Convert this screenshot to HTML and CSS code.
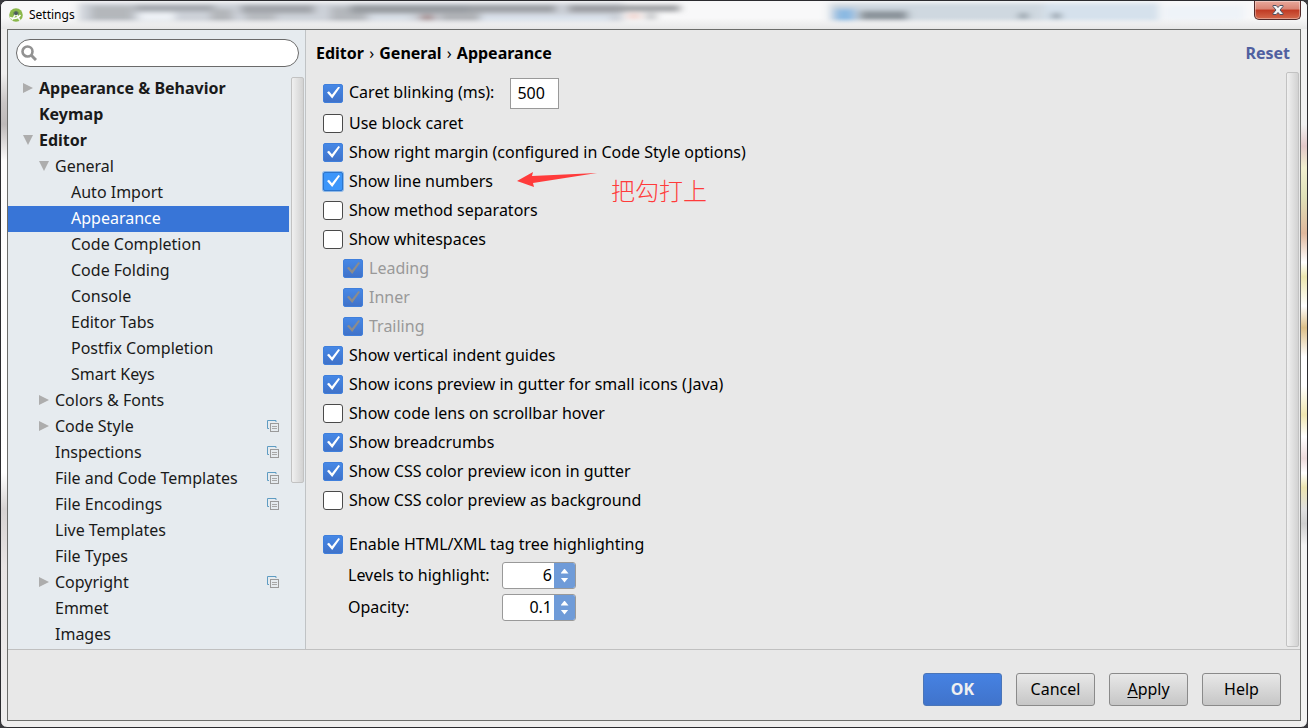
FILE: index.html
```html
<!DOCTYPE html>
<html lang="en">
  <head>
    <meta charset="UTF-8" />
    <meta name="viewport" content="width=device-width, initial-scale=1.0" />
    <title>Settings</title>
    <link rel="stylesheet" href="styles.css">
  </head>
  <body>
    <!-- Shared icons -->
    <svg class="sprite" aria-hidden="true">
      <symbol id="copy" viewBox="0 0 12 12">
        <path d="M2 8.500H.5V.5H9V2" fill="none" stroke="#5f9cc2" />
        <rect x="3.500" y="3.500" width="8" height="8" fill="#e6ebef" stroke="#9a9a9a" />
        <path d="M5 6.500h5M5 8.500h5" stroke="#a8a8a8" />
      </symbol>
    </svg>

    <div class="window">
      <header class="titlebar">
        <!-- Aero glass: blurred shapes of what lies behind the window -->
        <svg class="glass" viewBox="0 0 1308 29" preserveAspectRatio="none" aria-hidden="true">
          <defs>
            <filter id="blur" x="-5%" y="-50%" width="110%" height="200%">
              <feGaussianBlur stdDeviation="4 2" />
            </filter>
            <linearGradient id="fade" x1="0" y1="0" x2="0" y2="1">
              <stop offset="0.600" stop-color="#e7e7e7" stop-opacity="0" />
              <stop offset="1" stop-color="#e7e7e7" />
            </linearGradient>
          </defs>
          <rect width="1308" height="29" fill="#f8f8f9" />
          <g filter="url(#blur)">
            <rect x="78" y="2" width="545" height="20" fill="#cdd2d9" />
            <rect x="90" y="5" width="42" height="15" fill="#b4b7bb" />
            <rect x="138" y="12" width="36" height="9" fill="#eef2f6" />
            <rect x="134" y="4" width="80" height="7" fill="#a4a8ae" />
            <rect x="210" y="8" width="22" height="13" fill="#b3b6ba" />
            <rect x="240" y="4" width="74" height="9" fill="#a2a5aa" />
            <rect x="245" y="13" width="30" height="8" fill="#b8bbc0" />
            <rect x="330" y="6" width="36" height="15" fill="#b4b7bc" />
            <rect x="350" y="4" width="120" height="9" fill="#989ca1" />
            <rect x="370" y="14" width="40" height="7" fill="#d9e0e8" />
            <rect x="420" y="14" width="14" height="7" fill="#aa9698" />
            <rect x="440" y="12" width="40" height="9" fill="#b0b3b7" />
            <rect x="470" y="4" width="86" height="8" fill="#9da0a5" />
            <rect x="568" y="4" width="55" height="8" fill="#9c9ea3" />
            <rect x="480" y="15" width="130" height="7" fill="#dae2ec" />
            <rect x="620" y="4" width="60" height="7" fill="#a0a2a5" />
            <rect x="628" y="13" width="12" height="6" fill="#f0d2cc" />
            <rect x="646" y="12" width="10" height="8" fill="#c6c8ca" />
            <rect x="830" y="2" width="215" height="19" fill="#cfd8e0" />
            <rect x="1045" y="2" width="115" height="19" fill="#d5e1ec" />
            <rect x="1165" y="4" width="80" height="16" fill="#eef3f8" />
            <rect x="835" y="8" width="20" height="13" fill="#8bb9e2" />
            <rect x="860" y="10" width="48" height="10" fill="#8c949b" />
            <rect x="1020" y="12" width="8" height="7" fill="#8e99a2" />
            <rect x="1053" y="12" width="8" height="7" fill="#8e99a2" />
          </g>
          <rect width="1308" height="29" fill="url(#fade)" />
        </svg>
        <svg class="logo" viewBox="0 0 14 14" aria-hidden="true">
          <circle cx="7" cy="7" r="6.800" fill="#8bb84c" />
          <path d="M4.500 4.500Q7 1 9.500 4.500V7h-5z" fill="#5d7a55" />
          <path d="M6.500 6.500 3 12M7.500 6.500 11 12.500" stroke="#f2f5ee" stroke-width="1.500" />
          <path d="M1 9.500Q7 12.500 11.500 7" fill="none" stroke="#fff" stroke-width="1.500" />
          <circle cx="7" cy="5.500" r="1.500" fill="#4b5560" />
        </svg>
        <span class="title">Settings</span>
        <button class="close" aria-label="Close">
          <svg viewBox="0 0 12 10" width="12" height="10" aria-hidden="true">
            <path d="M1 .5h3.200L6 2.500 7.800.5H11v1L8 5l3 3.500v1H7.800L6 7.500 4.200 9.500H1v-1L4 5 1 1.500z" fill="#f5f5f5" stroke="#4c5263" />
          </svg>
        </button>
      </header>

      <div class="client">
        <div class="panes">
          <aside class="sidebar">
            <div class="search">
              <svg viewBox="0 0 16 16" width="16" height="16" aria-hidden="true">
                <circle cx="6.500" cy="6.500" r="5" fill="none" stroke="#929292" stroke-width="2.600" />
                <path d="M10 10l5 5" stroke="#929292" stroke-width="3" />
              </svg>
              <input type="text" aria-label="Search settings" />
            </div>
            <div class="tree-area">
              <ul class="tree">
                <li><a href="#" class="top"><i class="closed"></i>Appearance &amp; Behavior</a></li>
                <li><a href="#" class="top"><i></i>Keymap</a></li>
                <li><a href="#" class="top"><i class="open"></i>Editor</a></li>
                <li><a href="#" class="sub"><i class="open"></i>General</a></li>
                <li><a href="#" class="leaf"><i></i>Auto Import</a></li>
                <li><a href="#" class="leaf selected"><i></i>Appearance</a></li>
                <li><a href="#" class="leaf"><i></i>Code Completion</a></li>
                <li><a href="#" class="leaf"><i></i>Code Folding</a></li>
                <li><a href="#" class="leaf"><i></i>Console</a></li>
                <li><a href="#" class="leaf"><i></i>Editor Tabs</a></li>
                <li><a href="#" class="leaf"><i></i>Postfix Completion</a></li>
                <li><a href="#" class="leaf"><i></i>Smart Keys</a></li>
                <li><a href="#" class="sub"><i class="closed"></i>Colors &amp; Fonts</a></li>
                <li><a href="#" class="sub"><i class="closed"></i>Code Style<svg class="copy"><use href="#copy" /></svg></a></li>
                <li><a href="#" class="sub"><i></i>Inspections<svg class="copy"><use href="#copy" /></svg></a></li>
                <li><a href="#" class="sub"><i></i>File and Code Templates<svg class="copy"><use href="#copy" /></svg></a></li>
                <li><a href="#" class="sub"><i></i>File Encodings<svg class="copy"><use href="#copy" /></svg></a></li>
                <li><a href="#" class="sub"><i></i>Live Templates</a></li>
                <li><a href="#" class="sub"><i></i>File Types</a></li>
                <li><a href="#" class="sub"><i class="closed"></i>Copyright<svg class="copy"><use href="#copy" /></svg></a></li>
                <li><a href="#" class="sub"><i></i>Emmet</a></li>
                <li><a href="#" class="sub"><i></i>Images</a></li>
              </ul>
              <div class="scrollbar tree-scroll"></div>
            </div>
          </aside>

          <main class="content">
            <div class="heading">
              <h1>Editor <span>›</span> General <span>›</span> Appearance</h1>
              <a href="#" class="reset">Reset</a>
            </div>
            <div class="content-body">
              <form class="options">
                <div class="row caret-row">
                  <label class="check"><input type="checkbox" checked />Caret blinking (ms):</label>
                  <input class="ms" type="text" value="500" aria-label="Caret blinking (ms)" />
                </div>
                <label class="row check"><input type="checkbox" />Use block caret</label>
                <label class="row check"><input type="checkbox" checked />Show right margin (configured in Code Style options)</label>
                <div class="row noted">
                  <label class="check"><input type="checkbox" class="focused" checked />Show line numbers</label>
                  <div class="note">
                    <svg viewBox="0 0 80 16" width="80" height="16" aria-hidden="true">
                      <path d="M0 9 16 0l-1 4L80 1 16 11l1 4z" fill="#ff3b3b" />
                    </svg>
                    <span lang="zh">把勾打上</span>
                  </div>
                </div>
                <label class="row check"><input type="checkbox" />Show method separators</label>
                <label class="row check"><input type="checkbox" />Show whitespaces</label>
                <label class="row check nested"><input type="checkbox" checked disabled />Leading</label>
                <label class="row check nested"><input type="checkbox" checked disabled />Inner</label>
                <label class="row check nested"><input type="checkbox" checked disabled />Trailing</label>
                <label class="row check"><input type="checkbox" checked />Show vertical indent guides</label>
                <label class="row check"><input type="checkbox" checked />Show icons preview in gutter for small icons (Java)</label>
                <label class="row check"><input type="checkbox" />Show code lens on scrollbar hover</label>
                <label class="row check"><input type="checkbox" checked />Show breadcrumbs</label>
                <label class="row check"><input type="checkbox" checked />Show CSS color preview icon in gutter</label>
                <label class="row check"><input type="checkbox" />Show CSS color preview as background</label>
                <label class="row check tags"><input type="checkbox" checked />Enable HTML/XML tag tree highlighting</label>
                <div class="spinners">
                  <label for="levels">Levels to highlight:</label>
                  <div class="spinner">
                    <input id="levels" type="text" value="6" />
                    <div class="steps">
                      <button type="button" class="up" aria-label="More levels"></button>
                      <button type="button" class="down" aria-label="Fewer levels"></button>
                    </div>
                  </div>
                  <label for="opacity">Opacity:</label>
                  <div class="spinner">
                    <input id="opacity" type="text" value="0.1" />
                    <div class="steps">
                      <button type="button" class="up" aria-label="Raise opacity"></button>
                      <button type="button" class="down" aria-label="Lower opacity"></button>
                    </div>
                  </div>
                </div>
              </form>
              <div class="scrollbar"></div>
            </div>
          </main>
        </div>

        <footer class="footer">
          <button class="btn primary">OK</button>
          <button class="btn">Cancel</button>
          <button class="btn"><u>A</u>pply</button>
          <button class="btn">Help</button>
        </footer>
      </div>
    </div>
  </body>
</html>
```
FILE: styles.css
```css
* {
  box-sizing: border-box;
}

body {
  margin: 0;
  background-color: #3a3a3e;
  font-family: "Noto Sans", "Open Sans", sans-serif;
  font-size: 16px;
  line-height: 26px;
  color: #000;
}

input,
button {
  font: inherit;
  color: inherit;
}

.sprite {
  display: none;
}

/* Window frame */
.window {
  position: relative;
  display: flex;
  flex-direction: column;
  min-height: 100vh;
  padding: 0 6px 6px;
  border: 1px solid #2b2b2f;
  border-radius: 7px;
  background:
    linear-gradient(#f1f1f1 17%, #e2c8c8 20%, #f1efcf 23%, #dfe0b8 27%, #e0b89c 32%, #fff 36%, #ece6ae 38%, #fff 42%, #dcbf88 45%, #fff 49%, #fff 53%, #efe6b0 57%, #fff 60%, #ecdada 63%, #fff 65%, #ece4b0 67%, #e0e0e0 70%, #cfcfcf 72%, #f3f3f3 75%) right / 7px 100% no-repeat,
    linear-gradient(#efeeee 10%, #c9c5c5 14%, #bdb9b9 17%, #fdfcfc 22%, #fff 65%, #d6d2d2 70%, #e8e4e4 78%, #efeeee) left / 7px 100% no-repeat,
    #efeeee;
  overflow: hidden;
}

.titlebar {
  display: flex;
  align-items: center;
  height: 28px;
  padding-left: 2px;
}

.glass {
  position: absolute;
  top: 0;
  left: 0;
  width: 100%;
  height: 28px;
}

.logo {
  position: relative;
  width: 14px;
  height: 14px;
}

.title {
  position: relative;
  margin-left: 6px;
  font-size: 12px;
}

.close {
  position: relative;
  display: flex;
  align-items: center;
  justify-content: center;
  align-self: flex-start;
  width: 47px;
  height: 19px;
  margin-left: auto;
  padding: 0;
  border: 1px solid #532a29;
  border-top: none;
  border-radius: 0 0 5px 5px;
  background: linear-gradient(#e9a99c, #d98473 45%, #c03a23 50%, #d4694c);
  box-shadow: inset 0 0 0 1px rgba(255, 255, 255, 0.35);
}

.client {
  flex: 1;
  display: flex;
  flex-direction: column;
  border: 1px solid #6b6c6a;
  background-color: #e8e8e8;
}

.panes {
  flex: 1;
  display: flex;
  border-bottom: 1px solid #c0c0c0;
}

/* Settings tree */
.sidebar {
  width: 298px;
  padding-top: 9px;
  border-right: 1px solid #c0c3c5;
  background-color: #e6ebef;
}

.search {
  display: flex;
  align-items: center;
  height: 28px;
  margin: 0 6px 9px 8px;
  padding: 0 12px 0 4px;
  border: 1px solid #6a6a6a;
  border-radius: 14px;
  background-color: #fff;
}

.search input {
  flex: 1;
  min-width: 0;
  margin-left: 4px;
  padding: 0;
  border: none;
  outline: none;
  background: none;
}

.tree-area {
  display: flex;
}

.tree {
  flex: 1;
  margin: 0;
  padding: 0;
  list-style: none;
}

.tree a {
  display: flex;
  align-items: center;
  height: 26px;
  padding: 0 10px 2px 0;
  color: #1a1a1a;
  text-decoration: none;
  white-space: nowrap;
}

.tree i {
  width: 10px;
  height: 10px;
  margin-right: 6px;
  background-color: #adadad;
  clip-path: polygon(0 0, 0 0, 0 0);
}

.tree i.closed {
  clip-path: polygon(0 0, 100% 50%, 0 100%);
}

.tree i.open {
  clip-path: polygon(0 0, 100% 0, 50% 100%);
}

.tree .top {
  padding-left: 15px;
  font-weight: bold;
}

.tree .sub {
  padding-left: 31px;
}

.tree .leaf {
  padding-left: 47px;
}

.tree .selected {
  background-color: #3875d7;
  color: #fff;
}

.copy {
  width: 12px;
  height: 12px;
  margin-left: auto;
}

.scrollbar {
  width: 13px;
  border: 1px solid #c2c2c2;
  border-radius: 2px;
  background: linear-gradient(to right, #f0f0f0, #d2d2d2);
}

.tree-scroll {
  height: 406px;
  margin: 1px 1px 0 2px;
}

/* Options page */
.content {
  flex: 1;
  display: flex;
  flex-direction: column;
}

.heading {
  display: flex;
  justify-content: space-between;
  padding: 10px 10px 6px;
}

h1 {
  margin: 0;
  font-size: 16px;
}

h1 span {
  margin: 0 1px;
  font-weight: normal;
}

.reset {
  font-weight: bold;
  color: #5060a0;
  text-decoration: none;
}

.content-body {
  flex: 1;
  display: flex;
  justify-content: space-between;
  padding: 0 1px 2px 0;
}

.options {
  padding: 5px 0 0 17px;
}

.row {
  height: 29px;
}

.check {
  display: flex;
  align-items: center;
  padding-bottom: 2px;
  white-space: nowrap;
}

.check input {
  appearance: none;
  flex: none;
  width: 20px;
  height: 19px;
  margin: 2px 6px 0 0;
  border: 1px solid #4a4a4a;
  border-radius: 3px;
  background-color: #fff;
}

.check input:checked {
  border-color: #3f7fdc;
  border-radius: 2px;
  background: linear-gradient(#4688e6, #4072c9);
}

.check input:checked::after {
  content: "";
  display: block;
  width: 13px;
  height: 12px;
  margin: 2px 0 0 3px;
  background-color: #fff;
  clip-path: polygon(0 50%, 15% 40%, 38% 68%, 88% 0, 100% 8%, 40% 100%);
}

.check input.focused {
  border-color: #2c75cc;
  background: #3c96fa;
  box-shadow: 0 0 0 1px #8fb9e8;
}

.check input:disabled::after {
  background-color: #8c8c8c;
}

.nested {
  margin-left: 20px;
  color: #999;
}

.caret-row {
  display: flex;
  align-items: center;
  height: 32px;
}

.ms {
  width: 49px;
  height: 31px;
  margin-left: 16px;
  padding: 0 6px 1px;
  border: 1px solid #999;
  background-color: #fff;
}

.noted {
  position: relative;
  display: flex;
}

/* Hand-drawn remark next to the line numbers option */
.note {
  position: absolute;
  top: 5px;
  left: 194px;
  display: flex;
  color: #ff3b3b;
  font-family: "Noto Sans CJK SC", sans-serif;
  font-size: 24px;
  font-weight: 300;
  line-height: 36px;
  white-space: nowrap;
}

.note span {
  margin-left: 14px;
}

.tags {
  margin-top: 15px;
}

.spinners {
  display: grid;
  grid-template-columns: 144px 74px;
  gap: 5px 10px;
  align-items: center;
  margin: 3px 0 0 25px;
}

.spinners label {
  padding-bottom: 1px;
}

.spinner {
  display: flex;
  height: 27px;
  border: 1px solid #999;
  border-radius: 3px;
  background-color: #fff;
  overflow: hidden;
}

.spinner input {
  flex: 1;
  min-width: 0;
  padding: 0 2px 1px;
  border: none;
  background: none;
  text-align: right;
}

.steps {
  display: flex;
  flex-direction: column;
  align-items: center;
  justify-content: center;
  gap: 4px;
  width: 21px;
  background-color: #6f9bd8;
}

.steps button {
  width: 8px;
  height: 5px;
  padding: 0;
  border: none;
  background-color: #fff;
}

.up {
  clip-path: polygon(50% 0, 100% 100%, 0 100%);
}

.down {
  clip-path: polygon(0 0, 100% 0, 50% 100%);
}

/* Dialog buttons */
.footer {
  display: flex;
  justify-content: flex-end;
  gap: 14px;
  padding: 23px 19px 14px;
}

.btn {
  width: 79px;
  height: 33px;
  padding: 0 0 1px;
  border: 1px solid #8a8a8a;
  border-radius: 3px;
  background: linear-gradient(#e8e8e8, #c6c6c6);
}

.btn u {
  text-underline-offset: 2px;
}

.primary {
  border-color: #4a75b8;
  background: linear-gradient(#4682e2, #4073cb);
  color: #f0f0f0;
  font-weight: bold;
}
```
